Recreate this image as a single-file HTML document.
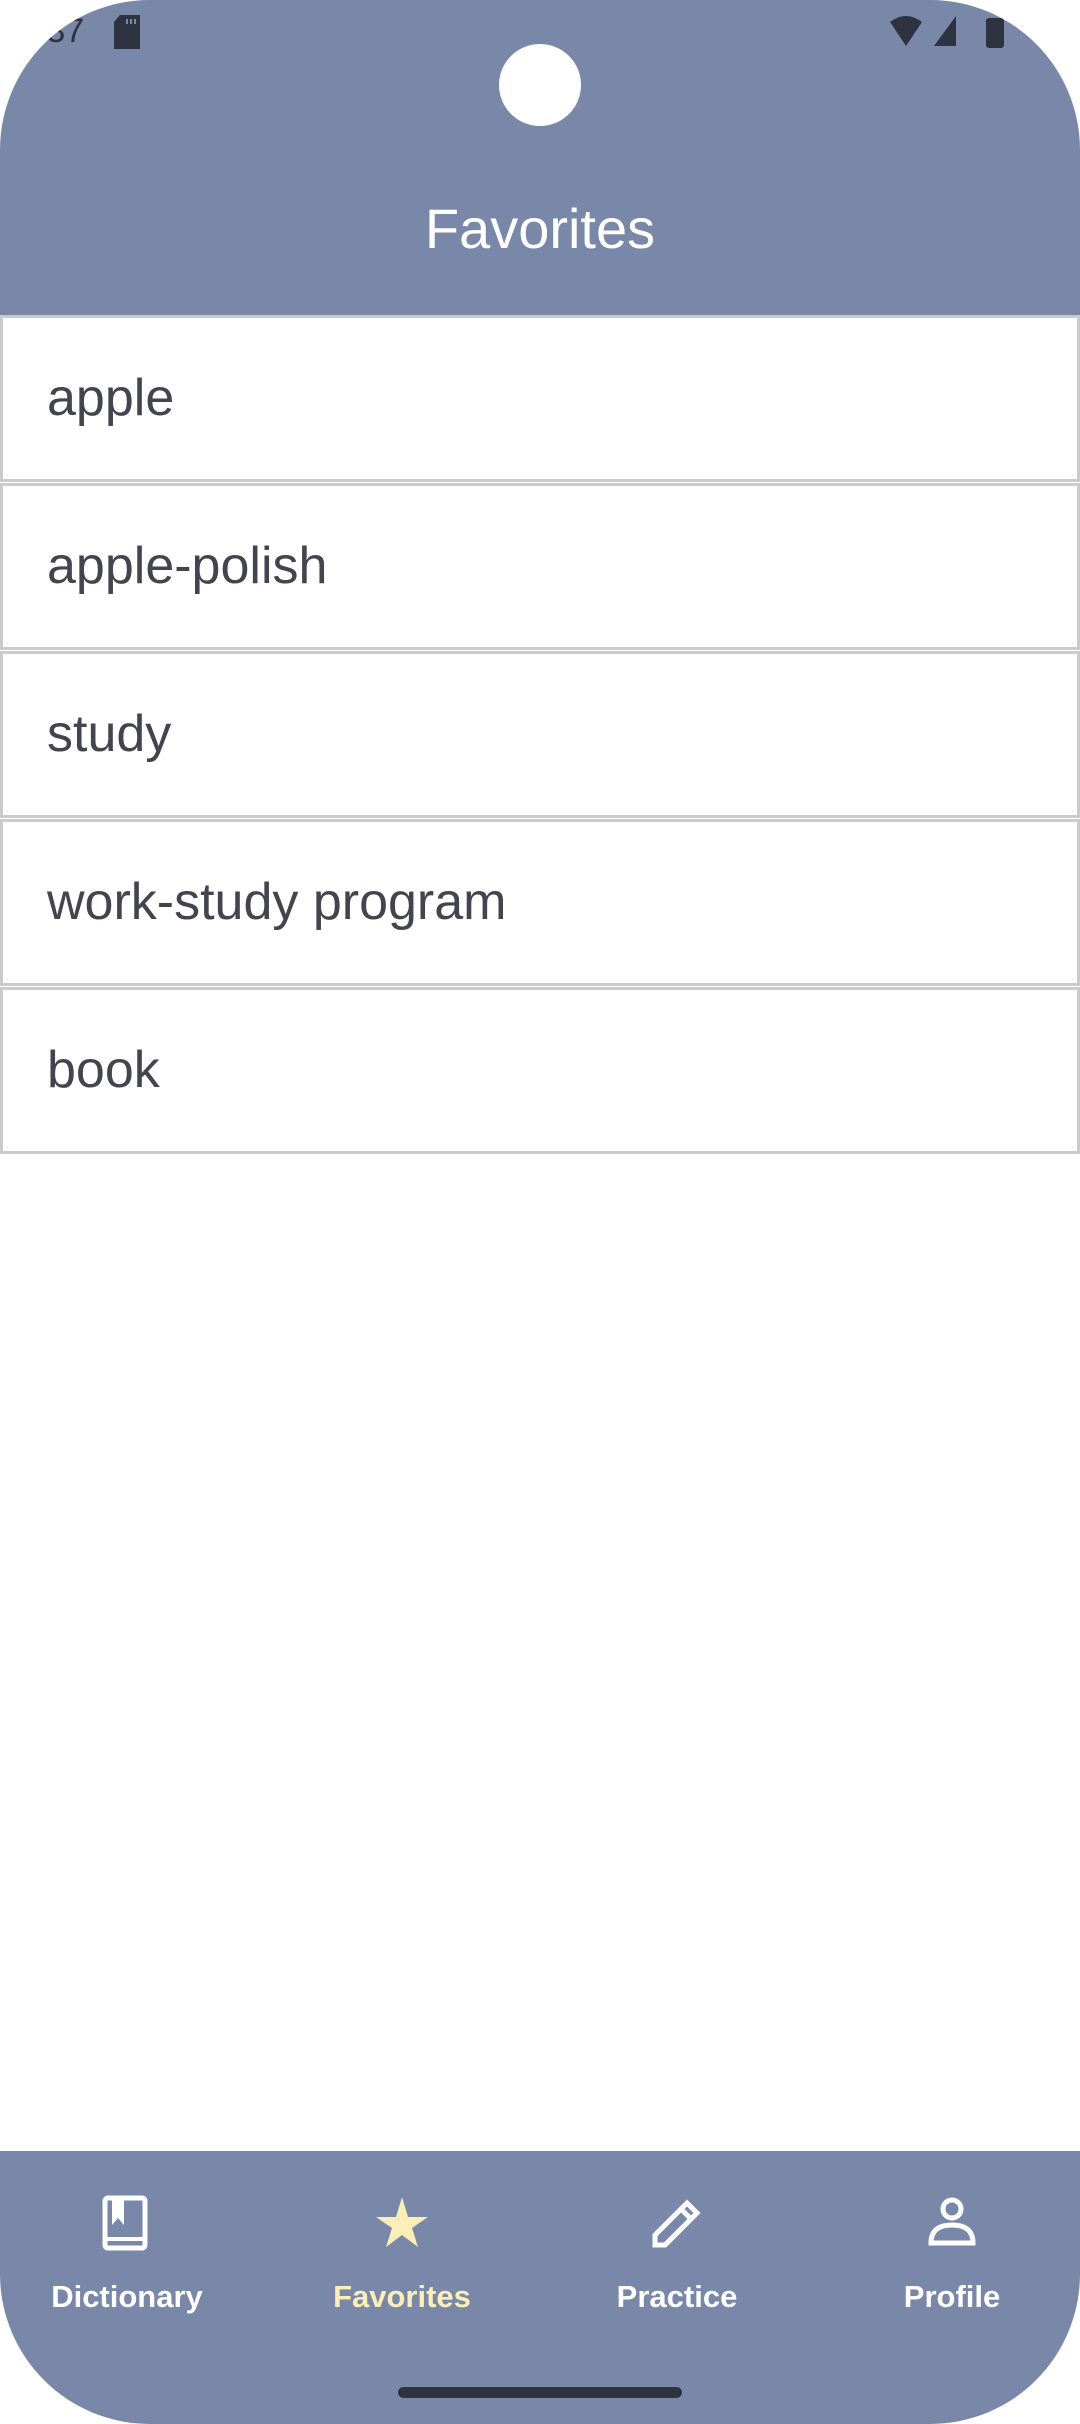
<!DOCTYPE html>
<html><head><meta charset="utf-8"><style>
*{margin:0;padding:0;box-sizing:border-box}
body{width:1080px;height:2424px;background:#fff;font-family:"Liberation Sans",Roboto,sans-serif;overflow:hidden}
.screen{position:absolute;left:0;top:0;width:1080px;height:2424px;background:#fff;border-radius:150px;overflow:hidden}
.hdr{position:absolute;left:0;top:0;width:1080px;height:315px;background:#7988a8}
.cam{position:absolute;left:499px;top:44px;width:82px;height:82px;border-radius:50%;background:#fff}
.time{position:absolute;left:18px;top:12px;font-size:34px;color:#2d3340}
.title{position:absolute;left:0;width:1080px;top:196px;text-align:center;color:#fff;font-size:56px}
.row{position:absolute;left:0;width:1080px;height:167px;border:3px solid #cbcbcb;background:#fff;font-size:52px;color:#44444f;padding-left:44px;line-height:161px}
.nav{position:absolute;left:0;top:2151px;width:1080px;height:273px;background:#7988a8}
.it{position:absolute;top:44px;width:200px;margin-left:-100px;text-align:center;color:#fff;font-size:31px;font-weight:bold}
.it svg{display:block;margin:0 auto 28px}
.bar{position:absolute;left:398px;top:2387px;width:284px;height:11px;border-radius:6px;background:#2d3340}
</style></head><body><div class="screen">
<div class="hdr"></div>
<div class="time">1:37</div>
<svg style="position:absolute;left:114px;top:15px" width="26" height="34"><path d="M6 0H26V34H0V7Z" fill="#2d3340"/><rect x="12" y="4" width="2" height="5" fill="#7988a8"/><rect x="16" y="4" width="2" height="5" fill="#7988a8"/><rect x="20" y="4" width="2" height="5" fill="#7988a8"/></svg>
<svg style="position:absolute;left:890px;top:14px" width="120" height="34"><path d="M0 8Q16 -4 32 8L16 32Z" fill="#2d3340"/><path d="M66 2V32H44Z" fill="#2d3340"/><rect x="96" y="4" width="18" height="30" rx="3" fill="#2d3340"/></svg>
<div class="cam"></div>
<div class="title">Favorites</div>
<div class="row" style="top:315px">apple</div>
<div class="row" style="top:483px">apple-polish</div>
<div class="row" style="top:651px">study</div>
<div class="row" style="top:819px">work-study program</div>
<div class="row" style="top:987px">book</div>
<div class="nav">
<div class="it" style="left:127px"><svg width="50" height="56" viewBox="0 0 50 56"><rect x="3" y="3" width="40" height="50" rx="3" fill="none" stroke="#fff" stroke-width="5"/><path d="M10 3V30L16 23L22 30V3" fill="#fff"/><path d="M3 44H43" stroke="#fff" stroke-width="4"/></svg>Dictionary</div>
<div class="it" style="left:402px"><svg width="56" height="56" viewBox="0 0 56 56"><path d="M28 2L34 22H54L38 33L44 52L28 40L12 52L18 33L2 22H22Z" fill="#fbefb7"/></svg><span style="color:#fbefb7">Favorites</span></div>
<div class="it" style="left:677px"><svg width="56" height="56" viewBox="0 0 56 56"><path d="M6 50V40L38 8L48 18L16 50Z M32 14L42 24" fill="none" stroke="#fff" stroke-width="5"/></svg>Practice</div>
<div class="it" style="left:952px"><svg width="50" height="56" viewBox="0 0 50 56"><circle cx="25" cy="14" r="9" fill="none" stroke="#fff" stroke-width="5"/><path d="M4 48Q4 30 25 30Q46 30 46 48Z" fill="none" stroke="#fff" stroke-width="5"/></svg>Profile</div>
</div>
<div class="bar"></div>
</div></body></html>
